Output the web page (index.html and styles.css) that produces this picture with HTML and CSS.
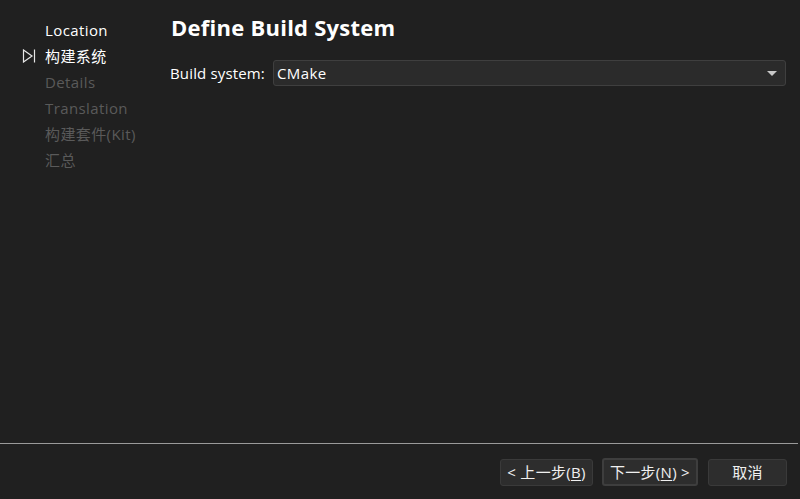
FILE: index.html
```html
<!DOCTYPE html>
<html lang="zh">
<head>
<meta charset="utf-8">
<link rel="stylesheet" href="styles.css">
</head>
<body>
<div class="window">
  <div class="main">
    <nav class="steps">
      <div class="step done">Location</div>
      <div class="step current"><span class="marker"><svg width="14" height="14" viewBox="0 0 14 14"><path d="M1.5 1 L10 7 L1.5 13 Z" fill="none" stroke="#e6e6e6" stroke-width="1.2"/><line x1="12.5" y1="0.5" x2="12.5" y2="13.5" stroke="#e6e6e6" stroke-width="1.2"/></svg></span>构建系统</div>
      <div class="step todo">Details</div>
      <div class="step todo">Translation</div>
      <div class="step todo">构建套件(Kit)</div>
      <div class="step todo">汇总</div>
    </nav>
    <section class="page">
      <h1 class="title">Define Build System</h1>
      <div class="field">
        <label class="label">Build system:</label>
        <div class="combo"><span>CMake</span><span class="arrow"></span></div>
      </div>
    </section>
  </div>
  <div class="separator"></div>
  <div class="buttons">
    <button class="btn back">&lt; 上一步(<u>B</u>)</button>
    <button class="btn next">下一步(<u>N</u>) &gt;</button>
    <button class="btn cancel">取消</button>
  </div>
</div>
</body>
</html>
```
FILE: styles.css
```css
html, body {
  margin: 0;
  padding: 0;
  background: #202020;
  width: 800px;
  height: 499px;
  overflow: hidden;
}
body {
  font-family: "Open Sans", "Noto Sans CJK SC", sans-serif;
  color: #ffffff;
}
.window {
  width: 800px;
  height: 499px;
  display: flex;
  flex-direction: column;
  background: #202020;
  border-radius: 0 0 8px 8px;
}
.main {
  flex: 1;
  display: flex;
}
.steps {
  width: 171px;
  padding-top: 19px;
  box-sizing: border-box;
  flex-shrink: 0;
}
.step {
  position: relative;
  height: 26px;
  line-height: 22px;
  padding-left: 45px;
  font-size: 15px;
  letter-spacing: 0.4px;
}
.step.done { color: #ffffff; }
.step.current { color: #ffffff; }
.step.todo { color: #5a5a5a; }
.marker {
  position: absolute;
  left: 22px;
  top: 4px;
  width: 14px;
  height: 14px;
}
.marker svg { display: block; }
.page {
  flex: 1;
  padding-top: 11px;
  padding-right: 14px;
}
.title {
  margin: 0;
  font-size: 22px;
  font-weight: 700;
  line-height: 32px;
  color: #ffffff;
  letter-spacing: 0.25px;
}
.field {
  display: flex;
  align-items: center;
  margin-top: 17px;
}
.label {
  font-size: 15px;
  width: 102px;
  flex-shrink: 0;
  color: #ffffff;
  letter-spacing: 0.15px;
  margin-left: -1px;
  padding-right: 1px;
}
.combo {
  flex: 1;
  height: 24px;
  display: flex;
  align-items: center;
  justify-content: space-between;
  background: #2b2b2b;
  border: 1px solid #3f3f3f;
  border-radius: 3px;
  padding: 0 8px 0 3px;
  font-size: 15px;
  letter-spacing: 0.4px;
}
.arrow {
  width: 0;
  height: 0;
  border-left: 5px solid transparent;
  border-right: 5px solid transparent;
  border-top: 5px solid #c8c8c8;
}
.separator {
  height: 1px;
  background: #9a9a9a;
  margin: 0 2px 0 0;
}
.buttons {
  height: 55px;
  display: flex;
  justify-content: flex-end;
  align-items: flex-start;
  padding: 15px 13px 0 0;
  gap: 9px;
  box-sizing: border-box;
}
.btn {
  height: 27px;
  padding: 0;
  background: #2d2d2d;
  border: 1px solid #3a3a3a;
  border-radius: 3px;
  color: #f0f0f0;
  font-family: "Open Sans", "Noto Sans CJK SC", sans-serif;
  font-size: 15px;
  letter-spacing: 0.3px;
  line-height: 25px;
}
.btn.back { width: 93px; }
.btn.next {
  width: 96px;
  border: 2px solid #3e3e3e;
  height: 28px;
  margin-top: -1px;
  line-height: 24px;
}
.btn.cancel {
  width: 79px;
  margin-left: 1px;
}
.btn u { text-underline-offset: 2px; }
```
